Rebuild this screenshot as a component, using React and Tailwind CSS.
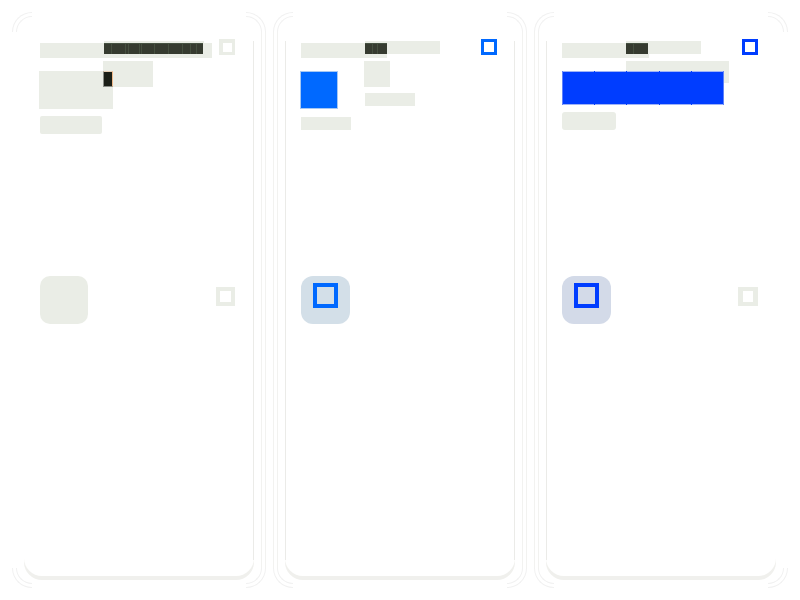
const LIGHT = 'bg-[#eaede6]';

function Block({ className, tone = LIGHT, children }) {
  return <div className={`shrink-0 ${tone} ${className}`}>{children}</div>;
}

// Dark strip, divided by thin lighter seams between its cells.
function Strip({ cells, className = '' }) {
  return (
    <div className={`flex h-[11px] gap-px border-t border-[#465242] bg-[#465040] ${className}`}>
      {cells.map((width, i) => (
        <div key={i} className="bg-[#363b30]" style={{ width }} />
      ))}
    </div>
  );
}

// Rounded corner arcs joined by optional side rails.
function Frame({ inset, left, right, arc }) {
  const corner = `${arc} border-[#f1f1f1]`;
  return (
    <div aria-hidden="true" className={`pointer-events-none absolute flex flex-col ${inset}`}>
      <div className="flex justify-between">
        <div className={`${corner} rounded-tl-full border-t border-l`} />
        <div className={`${corner} rounded-tr-full border-t border-r`} />
      </div>
      <div
        className={`flex-1 border-[#f2f2f0] ${left ? 'border-l' : ''} ${right ? 'border-r' : ''}`}
      />
      <div className="flex justify-between">
        <div className={`${corner} rounded-bl-full border-b border-l`} />
        <div className={`${corner} rounded-br-full border-b border-r`} />
      </div>
    </div>
  );
}

function Card({ left = true, right = true, back, front, marks, icon, tile, trailing }) {
  return (
    <section className="relative flex flex-col px-3 pt-[27px] pb-3">
      <Frame inset="inset-0" arc="size-5" left={left} right={right} />
      <Frame inset="inset-1" arc="size-4" left={left} right={right} />
      <div className="relative flex flex-1 flex-col rounded-b-[18px] bg-white shadow-[0_4px_0_#f0f0ed]">
        <div
          aria-hidden="true"
          className={`pointer-events-none absolute inset-x-0 top-0.5 bottom-4 border-[#ebebe8] ${left ? 'border-l' : ''} ${right ? 'border-r' : ''}`}
        />
        <header className="flex h-[237px] items-start justify-between pr-[18px] pl-4">
          <div className="grid">
            <div className="col-start-1 row-start-1 flex flex-col items-start pt-0.5 pl-16">{back}</div>
            <div className="col-start-1 row-start-1 flex flex-col items-start pt-1">{front}</div>
            <div className="col-start-1 row-start-1 flex flex-col items-start pt-1 pl-16">{marks}</div>
          </div>
          {icon}
        </header>
        <div className="flex items-start justify-between pr-[18px] pl-4">
          {tile}
          {trailing}
        </div>
      </div>
    </section>
  );
}

export default function App() {
  return (
    <main className="grid min-h-screen grid-cols-3 gap-[7px] bg-white p-3">
      <Card
        left={false}
        back={
          <>
            <Block className="h-[13px] w-[100px]" />
            <Block className="-ml-px mt-[7px] h-[26px] w-[50px]" />
          </>
        }
        front={
          <>
            <Block className="h-[15px] w-[172px]" />
            <Block className="-ml-px mt-[13px] h-[38px] w-[74px]" />
            <Block className="mt-[7px] h-[18px] w-[62px] rounded-[2px]" />
          </>
        }
        marks={
          <>
            <Strip cells={[7, 13, 2, 10, 1, 12, 13, 13, 7, 5, 6]} />
            <div className="-ml-px mt-[17px] h-4 w-[10px] border border-t-[#e6cdb5] border-r-[#f0b98a] border-b-[#8b8e88] border-l-[#8b8e88] bg-[#1b1f17]" />
          </>
        }
        icon={<div className="mr-px size-4 border-4 border-r-[3px] border-b-[3px] border-[#eaede6]" />}
        tile={<Block className="size-12 rounded-[10px]" />}
        trailing={<div className="mt-[11px] mr-px size-[19px] border-4 border-[#eaede6]" />}
      />
      <Card
        back={
          <>
            <Block className="h-[13px] w-[75px]" />
            <Block className="-ml-px mt-[7px] size-[26px]" />
            <Block className="mt-[6px] h-[13px] w-[50px]" />
          </>
        }
        front={
          <>
            <Block className="h-[15px] w-[86px]" />
            <Block tone="bg-[#0069ff]" className="-ml-px mt-[13px] size-[38px] border border-[#a6c8f3]" />
            <Block className="mt-2 h-[13px] w-[50px]" />
          </>
        }
        marks={<Strip cells={[7, 4, 9]} />}
        icon={<div className="size-4 border-3 border-[#0069ff]" />}
        tile={
          <div className="flex h-12 w-[49px] items-start rounded-[12px] bg-[#d3dfe8] pt-[7px] pl-3">
            <div className="size-[25px] border-4 border-[#0069ff]" />
          </div>
        }
      />
      <Card
        right={false}
        back={
          <>
            <Block className="h-[13px] w-[75px]" />
            <Block className="mt-[7px] h-[22px] w-[103px]" />
          </>
        }
        front={
          <>
            <Block className="h-[15px] w-[87px]" />
            <Block
              tone="bg-[#003dff]"
              className="mt-[13px] flex h-[34px] w-[162px] border-x border-x-[#5f82fa]"
            >
              {[0, 1, 2, 3, 4].map((i) => (
                <div key={i} className="mr-px flex-1 border-y border-[#9fb3f6] last:mr-0" />
              ))}
            </Block>
            <Block className="mt-[7px] h-[18px] w-[54px] rounded-[3px]" />
          </>
        }
        marks={<Strip cells={[7, 14]} />}
        icon={<div className="size-4 border-3 border-[#003dff]" />}
        tile={
          <div className="flex h-12 w-[49px] items-start rounded-[12px] bg-[#d3dae8] pt-[7px] pl-3">
            <div className="size-[25px] border-4 border-[#003dff]" />
          </div>
        }
        trailing={<div className="mt-[11px] h-[19px] w-5 border-4 border-r-[5px] border-l-[5px] border-[#eaede6]" />}
      />
    </main>
  );
}
